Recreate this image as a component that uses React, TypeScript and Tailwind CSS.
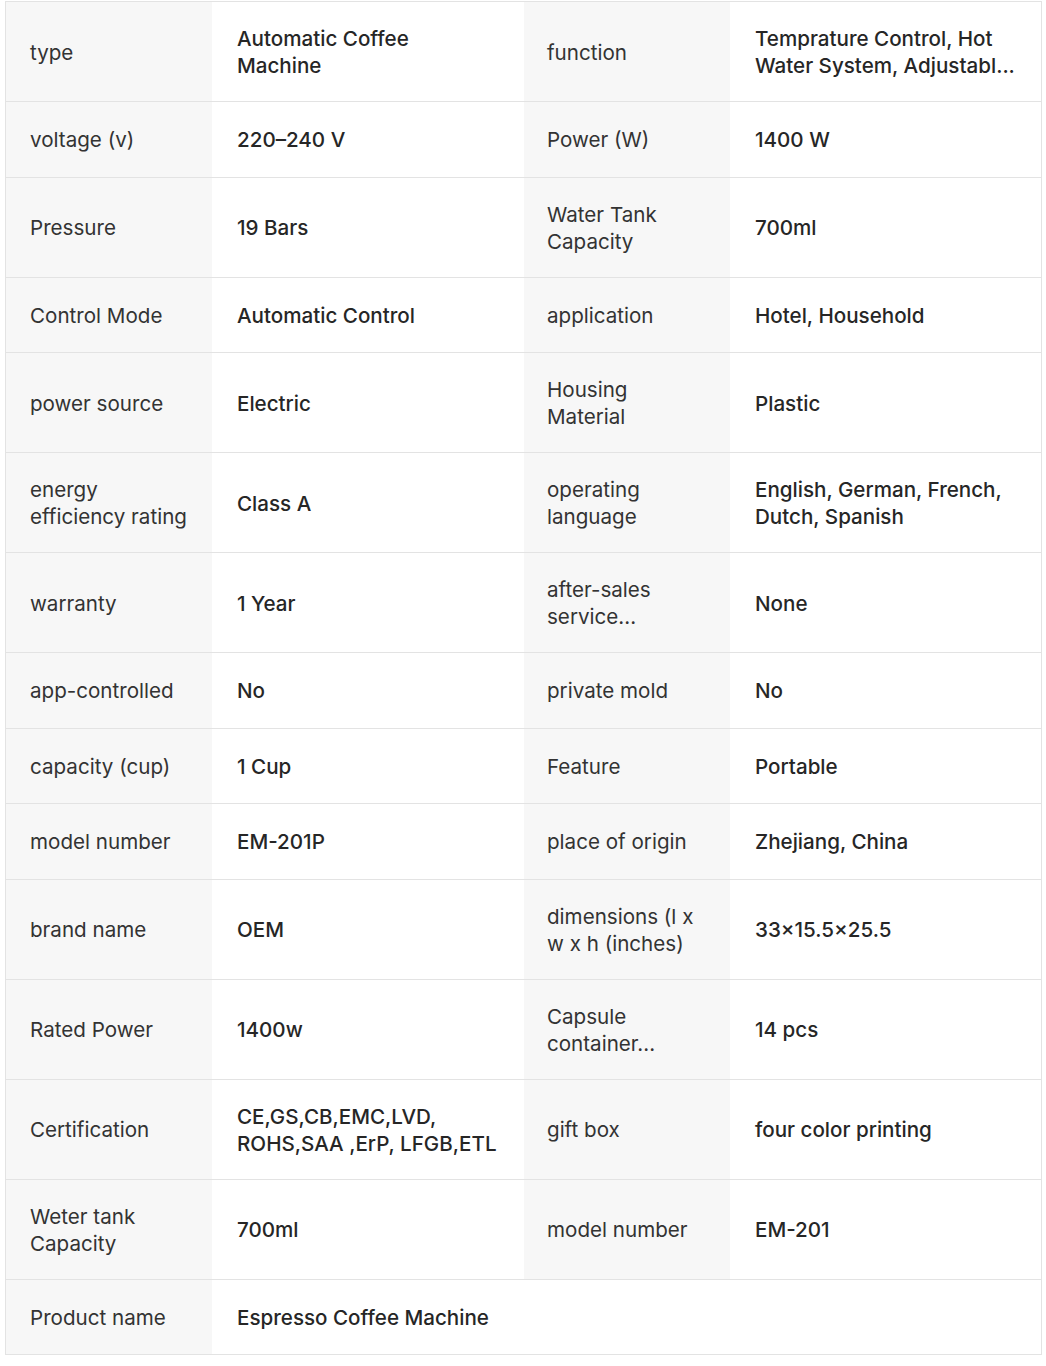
import React from "react";

type Spec = { label: string[]; value: string[] };

const rows: [Spec, Spec | null][] = [
  [
    { label: ["type"], value: ["Automatic Coffee", "Machine"] },
    { label: ["function"], value: ["Temprature Control, Hot", "Water System, Adjustabl..."] },
  ],
  [
    { label: ["voltage (v)"], value: ["220–240 V"] },
    { label: ["Power (W)"], value: ["1400 W"] },
  ],
  [
    { label: ["Pressure"], value: ["19 Bars"] },
    { label: ["Water Tank", "Capacity"], value: ["700ml"] },
  ],
  [
    { label: ["Control Mode"], value: ["Automatic Control"] },
    { label: ["application"], value: ["Hotel, Household"] },
  ],
  [
    { label: ["power source"], value: ["Electric"] },
    { label: ["Housing", "Material"], value: ["Plastic"] },
  ],
  [
    { label: ["energy", "efficiency rating"], value: ["Class A"] },
    { label: ["operating", "language"], value: ["English, German, French,", "Dutch, Spanish"] },
  ],
  [
    { label: ["warranty"], value: ["1 Year"] },
    { label: ["after-sales", "service..."], value: ["None"] },
  ],
  [
    { label: ["app-controlled"], value: ["No"] },
    { label: ["private mold"], value: ["No"] },
  ],
  [
    { label: ["capacity (cup)"], value: ["1 Cup"] },
    { label: ["Feature"], value: ["Portable"] },
  ],
  [
    { label: ["model number"], value: ["EM-201P"] },
    { label: ["place of origin"], value: ["Zhejiang, China"] },
  ],
  [
    { label: ["brand name"], value: ["OEM"] },
    { label: ["dimensions (l x", "w x h (inches)"], value: ["33×15.5×25.5"] },
  ],
  [
    { label: ["Rated Power"], value: ["1400w"] },
    { label: ["Capsule", "container..."], value: ["14 pcs"] },
  ],
  [
    { label: ["Certification"], value: ["CE,GS,CB,EMC,LVD,", "ROHS,SAA ,ErP, LFGB,ETL"] },
    { label: ["gift box"], value: ["four color printing"] },
  ],
  [
    { label: ["Weter tank", "Capacity"], value: ["700ml"] },
    { label: ["model number"], value: ["EM-201"] },
  ],
  [{ label: ["Product name"], value: ["Espresso Coffee Machine"] }, null],
];

function Lines({ lines }: { lines: string[] }) {
  return (
    <div>
      {lines.map((l, i) => (
        <div key={i} className="whitespace-nowrap">
          {l}
        </div>
      ))}
    </div>
  );
}

function LabelCell({ lines, pad }: { lines: string[]; pad: string }) {
  return (
    <div className={`flex min-h-[74.5px] items-center bg-[#f7f7f7] pt-[23px] pb-[22px] text-[#333333] ${pad}`}>
      <Lines lines={lines} />
    </div>
  );
}

function ValueCell({ lines, span }: { lines: string[]; span?: boolean }) {
  return (
    <div
      className={`flex min-h-[74.5px] items-center bg-white pl-[25px] pt-[23px] pb-[22px] font-medium text-[#262626] ${
        span ? "col-span-3" : ""
      }`}
    >
      <Lines lines={lines} />
    </div>
  );
}

export default function App() {
  return (
    <div className="min-h-[1366px] bg-white pt-[1px] pl-[5px]">
      <div
        className="w-[1037px] border border-[#e3e3e3] text-[20.6px] leading-[27px]"
        style={{ fontFamily: "Inter, 'Noto Sans', sans-serif" }}
      >
        {rows.map(([a, b], i) => (
          <div
            key={i}
            className={`grid grid-cols-[206px_312px_206px_1fr] ${
              i < rows.length - 1 ? "border-b border-[#e3e3e3]" : ""
            }`}
          >
            <LabelCell lines={a.label} pad="pl-[24px]" />
            <ValueCell lines={a.value} span={!b} />
            {b && (
              <>
                <LabelCell lines={b.label} pad="pl-[23px]" />
                <ValueCell lines={b.value} />
              </>
            )}
          </div>
        ))}
      </div>
    </div>
  );
}
